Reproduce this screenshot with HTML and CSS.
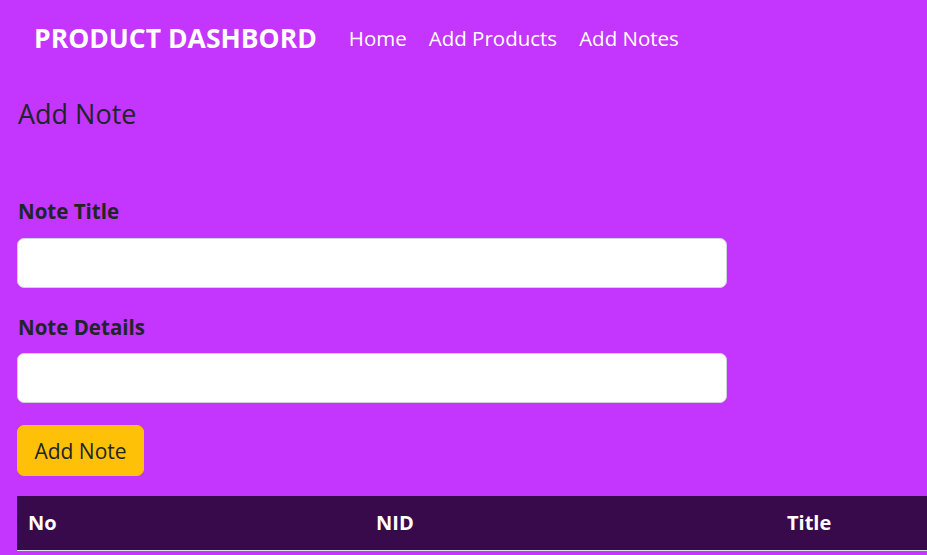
FILE: index.html
```html
<!DOCTYPE html>
<html lang="en">
<head>
<meta charset="utf-8">
<title>Product Dashbord</title>
<link rel="stylesheet" href="styles.css">
</head>
<body>
<div class="page">
  <nav class="navbar">
    <a class="brand" href="#">PRODUCT DASHBORD</a>
    <ul class="nav-links">
      <li><a href="#">Home</a></li>
      <li><a href="#">Add Products</a></li>
      <li><a href="#">Add Notes</a></li>
    </ul>
  </nav>
  <main class="content">
    <h3 class="page-title">Add Note</h3>
    <form class="note-form">
      <label class="field-label" for="title">Note Title</label>
      <input class="field-input" id="title" type="text">
      <label class="field-label second" for="details">Note Details</label>
      <input class="field-input" id="details" type="text">
      <button class="btn-add" type="button">Add Note</button>
    </form>
    <table class="notes-table">
      <thead>
        <tr>
          <th class="col-no">No</th>
          <th class="col-nid">NID</th>
          <th class="col-title">Title</th>
        </tr>
      </thead>
    </table>
  </main>
</div>
</body>
</html>
```
FILE: styles.css
```css
* { box-sizing: border-box; }
html, body {
  margin: 0;
  padding: 0;
  background: #c435fe;
  overflow: hidden;
}
body {
  font-family: "Open Sans", "Noto Sans", sans-serif;
  color: #212529;
}
.page {
  width: 927px;
  height: 555px;
  overflow: hidden;
}
.navbar {
  display: flex;
  align-items: center;
  height: 79px;
  padding-left: 34px;
  padding-bottom: 3px;
}
.brand {
  color: #fff;
  text-decoration: none;
  font-weight: 700;
  font-size: 26.5px;
  margin-right: 32px;
}
.nav-links {
  display: flex;
  gap: 22px;
  list-style: none;
  margin: 0;
  padding: 0;
}
.nav-links a {
  color: #fff;
  text-decoration: none;
  font-size: 20.5px;
}
.content {
  padding-left: 17px;
}
.page-title {
  margin: 19px 0 0 1px;
  font-size: 27px;
  font-weight: 400;
  line-height: 31px;
}
.note-form {
  display: flex;
  flex-direction: column;
  align-items: flex-start;
  margin-top: 67px;
}
.field-label {
  font-weight: 700;
  font-size: 20.5px;
  line-height: 30px;
  margin-left: 1px;
  margin-bottom: 12px;
}
.field-label.second {
  margin-top: 24px;
  margin-bottom: 11px;
}
.field-input {
  width: 710px;
  height: 50px;
  border: 1px solid #ced4da;
  border-radius: 7px;
  background: #fff;
  font-size: 20px;
  padding: 8px 16px;
}
.btn-add {
  margin-top: 22px;
  width: 127px;
  height: 51px;
  background: #ffc107;
  border: 1px solid #ffc107;
  border-radius: 7px;
  color: #212529;
  font-family: inherit;
  font-size: 21px;
  padding: 0;
}
.notes-table {
  margin-top: 20px;
  border-collapse: collapse;
  width: 1100px;
  table-layout: fixed;
}
.notes-table th {
  background: #390a4b;
  color: #fff;
  font-weight: 700;
  font-size: 20px;
  text-align: left;
  height: 54px;
  padding: 0 11px;
  border-bottom: 1px solid #dee2e6;
}
.col-no { width: 348px; }
.col-nid { width: 411px; }
```
